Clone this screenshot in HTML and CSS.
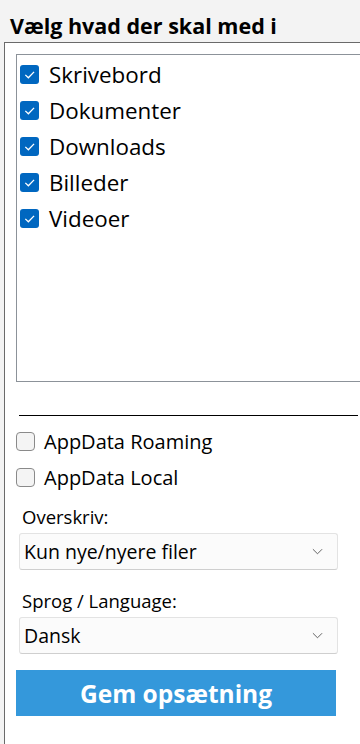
FILE: index.html
```html
<!DOCTYPE html>
<html lang="da">
<head>
  <meta charset="UTF-8">
  <meta name="viewport" content="width=device-width, initial-scale=1.0">
  <title>Backup opsætning</title>
  <link rel="stylesheet" href="styles.css">
</head>
<body>
  <h1 class="title">Vælg hvad der skal med i</h1>
  <div class="panel">
    <div class="folder-list">
      <label class="item"><span class="box checked"><svg viewBox="0 0 10 10"><path d="M2.8 5.2 L4.4 6.7 L7.4 3.6"/></svg></span>Skrivebord</label>
      <label class="item"><span class="box checked"><svg viewBox="0 0 10 10"><path d="M2.8 5.2 L4.4 6.7 L7.4 3.6"/></svg></span>Dokumenter</label>
      <label class="item"><span class="box checked"><svg viewBox="0 0 10 10"><path d="M2.8 5.2 L4.4 6.7 L7.4 3.6"/></svg></span>Downloads</label>
      <label class="item"><span class="box checked"><svg viewBox="0 0 10 10"><path d="M2.8 5.2 L4.4 6.7 L7.4 3.6"/></svg></span>Billeder</label>
      <label class="item"><span class="box checked"><svg viewBox="0 0 10 10"><path d="M2.8 5.2 L4.4 6.7 L7.4 3.6"/></svg></span>Videoer</label>
    </div>

    <hr class="sep">

    <label class="opt"><span class="box"></span>AppData Roaming</label>
    <label class="opt"><span class="box"></span>AppData Local</label>

    <div class="field">
      <div class="field-label">Overskriv:</div>
      <div class="select">
        <span>Kun nye/nyere filer</span>
        <svg class="chev" viewBox="0 0 12 7"><path d="M1 1 L6 6 L11 1"/></svg>
      </div>
    </div>

    <div class="field">
      <div class="field-label">Sprog / Language:</div>
      <div class="select">
        <span>Dansk</span>
        <svg class="chev" viewBox="0 0 12 7"><path d="M1 1 L6 6 L11 1"/></svg>
      </div>
    </div>

    <button class="save">Gem opsætning</button>
  </div>
</body>
</html>
```

FILE: styles.css
```css
* { box-sizing: border-box; margin: 0; padding: 0; }
html, body { height: 100%; overflow: hidden; }
body {
  background: #f3f3f3;
  font-family: "Open Sans", "Noto Sans", sans-serif;
  color: #000;
}
.title {
  height: 42px;
  padding: 13px 0 0 10px;
  font-size: 21.5px;
  font-weight: 700;
  line-height: 26px;
}
.panel {
  margin-left: 4px;
  width: 380px;
  height: 720px;
  background: #fff;
  border-left: 1px solid #6a6a6a;
  border-top: 1px solid #6a6a6a;
  padding: 11px 0 0 11px;
}
.folder-list {
  height: 328px;
  border: 1px solid #8c9299;
  border-right: none;
  padding: 1px 0 0 3px;
}
.item {
  display: flex;
  align-items: center;
  height: 36px;
  font-size: 22.4px;
  gap: 10px;
}
.box {
  width: 19px;
  height: 19px;
  border-radius: 3px;
  flex: none;
  display: flex;
}
.box.checked { background: #0067c0; }
.box svg { width: 19px; height: 19px; fill: none; stroke: #fff; stroke-width: 0.7; }
.sep {
  border: none;
  border-top: 1px solid #000;
  margin: 33px 0 0 3px;
  width: 339px;
}
.opt {
  display: flex;
  align-items: center;
  height: 36px;
  font-size: 20px;
  gap: 9px;
}
.opt:first-of-type { margin-top: 7px; }
.opt .box {
  background: #f4f4f4;
  border: 1px solid #8a8a8a;
  border-radius: 4px;
}
.field { padding-left: 3px; width: 322px; }
.field + .field { margin-top: 9px; }
.field-label {
  font-size: 18.5px;
  height: 38px;
  line-height: 28px;
  padding: 8px 0 0 3px;
}
.select {
  height: 37px;
  background: #fbfbfb;
  border: 1px solid #e3e3e3;
  border-bottom-color: #cfcfcf;
  border-radius: 3px;
  display: flex;
  align-items: center;
  justify-content: space-between;
  padding: 0 14px 0 4px;
  font-size: 19.5px;
}
.chev { width: 11px; height: 7px; fill: none; stroke: #555; stroke-width: 1; }
.save {
  display: block;
  margin-top: 16px;
  width: 320px;
  height: 46px;
  border: none;
  background: #3498db;
  color: #fff;
  font-family: inherit;
  font-size: 24.5px;
  font-weight: 700;
}
```
